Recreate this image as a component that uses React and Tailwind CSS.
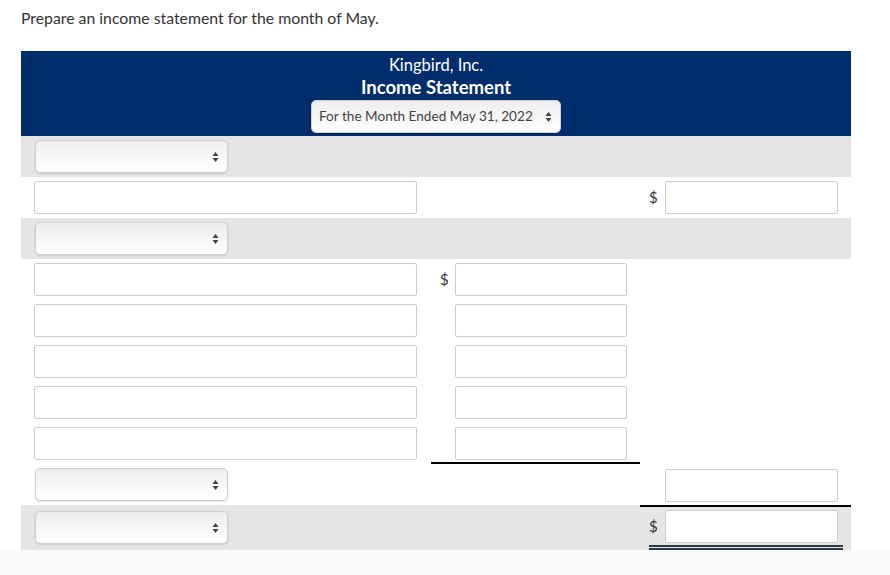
function Arrows() {
  return (
    <svg width="7" height="12" viewBox="0 0 7 12" className="shrink-0">
      <path d="M3.5 1 L6.5 5 L0.5 5 Z" fill="#444" />
      <path d="M3.5 11 L6.5 7 L0.5 7 Z" fill="#444" />
    </svg>
  )
}

function Select({ label, className = '' }) {
  return (
    <div
      className={`flex h-[33px] items-center justify-between rounded-[5px] border border-[#cfcfcf] bg-gradient-to-b from-[#eeeeee] via-[#f6f6f6] to-[#ffffff] pl-[7px] pr-[8px] shadow-[0_1px_2px_rgba(0,0,0,0.12)] ${className}`}
    >
      <span className="whitespace-nowrap text-[13.6px] text-[#444]">{label}</span>
      <Arrows />
    </div>
  )
}

function Input({ className = '' }) {
  return <div className={`h-[33px] rounded-[2px] border border-[#cccccc] bg-white ${className}`} />
}

function Dollar() {
  return <span className="w-[13px] text-[15px] text-[#333]">$</span>
}

function Row({ gray, height = 'h-[41px]', children }) {
  return (
    <div className={`grid grid-cols-[410px_209px_211px] items-center ${height} ${gray ? 'bg-[#e5e5e5]' : 'bg-white'}`}>
      {children}
    </div>
  )
}

function Mid({ children }) {
  return (
    <div className="flex h-full items-center gap-[2px] pl-[9px] pr-[13px]">
      {children}
    </div>
  )
}

function Right({ children }) {
  return (
    <div className="flex h-full items-center gap-[2px] pl-[9px] pr-[13px]">
      {children}
    </div>
  )
}

export default function App() {
  return (
    <div className="min-h-[575px] bg-white font-['Lato','Open_Sans',sans-serif] text-[#333]">
      <div className="px-[21px] pt-[8px]">
        <p className="text-[15.8px] leading-[20px] text-[#333]">Prepare an income statement for the month of May.</p>

        <div className="mt-[23px] w-[830px]">
          <div className="flex h-[85px] flex-col items-center bg-[#002d6b] pt-[3px]">
            <p className="text-[16.5px] leading-[22px] text-white">Kingbird, Inc.</p>
            <p className="text-[18.5px] font-bold leading-[22px] text-white">Income Statement</p>
            <Select label="For the Month Ended May 31, 2022" className="mt-[2px] w-[250px] gap-2" />
          </div>

          <Row gray>
            <div className="pl-[14px]">
              <Select className="w-[193px]" />
            </div>
            <div />
            <div />
          </Row>

          <Row>
            <div className="pl-[13px] pr-[14px]"><Input /></div>
            <div />
            <Right>
              <Dollar />
              <Input className="ml-[1px] flex-1" />
            </Right>
          </Row>

          <Row gray>
            <div className="pl-[14px]">
              <Select className="w-[193px]" />
            </div>
            <div />
            <div />
          </Row>

          <Row>
            <div className="pl-[13px] pr-[14px]"><Input /></div>
            <Mid>
              <Dollar />
              <Input className="flex-1" />
            </Mid>
            <div />
          </Row>

          {[0, 1, 2].map((i) => (
            <Row key={i}>
              <div className="pl-[13px] pr-[14px]"><Input /></div>
              <Mid>
                <span className="w-[13px]" />
                <Input className="flex-1" />
              </Mid>
              <div />
            </Row>
          ))}

          <Row>
            <div className="pl-[13px] pr-[14px]"><Input /></div>
            <div className="flex h-full items-center border-b-2 border-black">
              <div className="flex h-full w-full items-center gap-[2px] pl-[9px] pr-[13px] pt-[2px]">
                <span className="w-[13px]" />
                <Input className="flex-1" />
              </div>
            </div>
            <div />
          </Row>

          <Row>
            <div className="pl-[14px]">
              <Select className="w-[193px]" />
            </div>
            <div />
            <div className="flex h-full items-center pl-[25px] pr-[13px] pt-[1px]">
              <Input className="flex-1" />
            </div>
          </Row>

          <Row gray height="h-[45px]">
            <div className="pl-[14px]">
              <Select className="w-[193px]" />
            </div>
            <div />
            <div className="flex h-full flex-col border-t-2 border-black pl-[9px] pr-[8px]">
              <div className="flex items-center gap-[2px] pt-[3px] pr-[5px]">
                <Dollar />
                <Input className="ml-[1px] flex-1" />
              </div>
              <div className="mt-[2px] h-[5px] border-y-2 border-[#2d3a4a]" />
            </div>
          </Row>
        </div>
      </div>
      <div className="h-[25px] bg-[#fafafa]" />
    </div>
  )
}
